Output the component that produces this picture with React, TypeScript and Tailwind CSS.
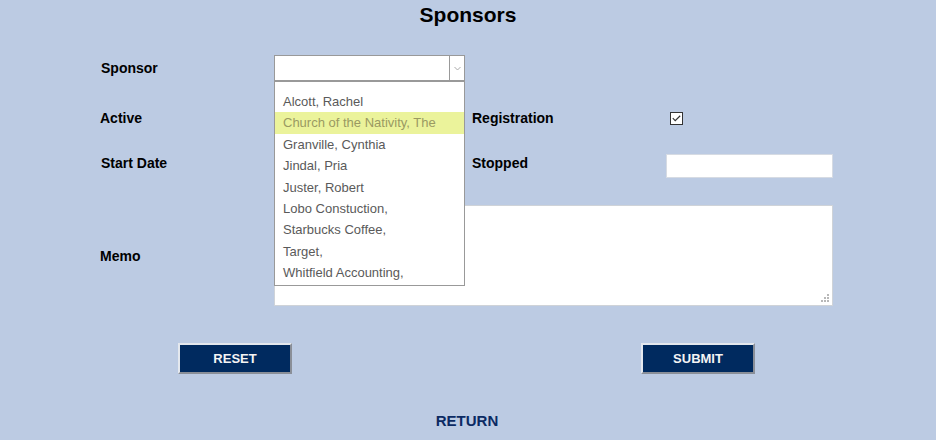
import React from "react";

const items = [
  "Alcott, Rachel",
  "Church of the Nativity, The",
  "Granville, Cynthia",
  "Jindal, Pria",
  "Juster, Robert",
  "Lobo Constuction,",
  "Starbucks Coffee,",
  "Target,",
  "Whitfield Accounting,",
];

export default function App() {
  return (
    <div className="w-[936px] h-[440px] bg-[#bccbe3] font-['Liberation_Sans',Arial,sans-serif] text-black overflow-hidden">
      <h1 className="h-[30px] leading-[30px] text-center text-[21px] font-bold">Sponsors</h1>

      {/* Sponsor row */}
      <div className="mt-[25px] flex h-[26px] items-center pl-[101px] relative z-10">
        <div className="w-[173px] text-[14px] font-bold mt-[1px]">Sponsor</div>
        <div className="relative w-[191px] h-[26px] border border-[#999] bg-white flex">
          <div className="flex-1" />
          <div className="w-[15px] border-l border-[#999] flex items-center justify-center">
            <svg width="7" height="5" viewBox="0 0 7 5">
              <polyline points="0.5,1 3.5,4 6.5,1" fill="none" stroke="#aaa" strokeWidth="1" />
            </svg>
          </div>
          <div className="absolute left-[-1px] top-[25px] w-[191px] h-[205px] border border-[#999] bg-white pt-[9px]">
            {items.map((it, i) => (
              <div
                key={it}
                className={
                  i === 1
                    ? "h-[21.375px] leading-[21.375px] pl-[8px] text-[13px] bg-[#ebf39b] text-[#9a9a62] whitespace-nowrap"
                    : "h-[21.375px] leading-[21.375px] pl-[8px] text-[13px] text-[#5a5a5a] whitespace-nowrap"
                }
              >
                {it}
              </div>
            ))}
          </div>
        </div>
      </div>

      {/* Active / Registration */}
      <div className="mt-[24px] flex h-[26px] items-center pl-[100px]">
        <div className="w-[174px] text-[14px] font-bold">Active</div>
        <div className="w-[198px]" />
        <div className="w-[198px] text-[14px] font-bold">Registration</div>
        <div className="w-[13px] h-[13px] border border-[#333] bg-white flex items-center justify-center">
          <svg width="9" height="7" viewBox="0 0 9 7">
            <polyline points="0.8,3.2 3.2,5.6 8.2,0.8" fill="none" stroke="#333" strokeWidth="1.2" />
          </svg>
        </div>
      </div>

      {/* Start Date / Stopped */}
      <div className="mt-[23px] flex h-[24px] items-start pl-[101px]">
        <div className="w-[173px] text-[14px] font-bold leading-[16px] mt-[1px]">Start Date</div>
        <div className="w-[198px]" />
        <div className="w-[194px] text-[14px] font-bold leading-[16px] mt-[1px]">Stopped</div>
        <div className="w-[167px] h-[24px] bg-white border border-[#d6dbe3]" />
      </div>

      {/* Memo */}
      <div className="mt-[27px] flex h-[101px] items-center pl-[100px]">
        <div className="w-[174px] text-[14px] font-bold mt-[2px]">Memo</div>
        <div className="relative w-[559px] h-[101px] bg-white border border-[#cfd3d8]">
          <svg className="absolute right-[3px] bottom-[3px]" width="8" height="8" viewBox="0 0 8 8">
            <rect x="6" y="0" width="2" height="2" fill="#b8b8b8" />
            <rect x="3" y="3" width="2" height="2" fill="#b8b8b8" />
            <rect x="6" y="3" width="2" height="2" fill="#b8b8b8" />
            <rect x="0" y="6" width="2" height="2" fill="#b8b8b8" />
            <rect x="3" y="6" width="2" height="2" fill="#b8b8b8" />
            <rect x="6" y="6" width="2" height="2" fill="#b8b8b8" />
          </svg>
        </div>
      </div>

      {/* Buttons */}
      <div className="mt-[37px] flex pl-[178px]">
        <button className="w-[114px] h-[31px] bg-[#002a5f] text-[#f4f4f4] text-[13px] font-bold border-2 border-t-[#e4e8ee] border-l-[#e4e8ee] border-r-[#8a8f98] border-b-[#8a8f98]">
          RESET
        </button>
        <button className="ml-[349px] w-[114px] h-[31px] bg-[#002a5f] text-[#f4f4f4] text-[13px] font-bold border-2 border-t-[#e4e8ee] border-l-[#e4e8ee] border-r-[#8a8f98] border-b-[#8a8f98]">
          SUBMIT
        </button>
      </div>

      <div className="mt-[37px] h-[20px] leading-[20px] text-center text-[15px] font-bold text-[#0b2a63] pr-[2px]">
        RETURN
      </div>
    </div>
  );
}
